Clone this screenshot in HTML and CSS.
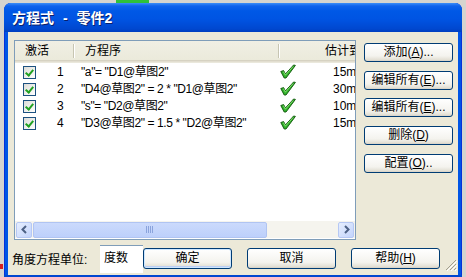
FILE: index.html
```html
<!DOCTYPE html>
<html lang="zh-CN">
<head>
    <meta charset="UTF-8">
    <title>方程式 - 零件2</title>
    <link rel="stylesheet" href="styles.css">
</head>
<body>
    <div class="desk-mark"></div>
    <div class="desk-x"></div>

    <div class="window">
        <div class="titlebar">方程式 - 零件2</div>

        <div class="client">
            <div class="upper">
                <div class="listview">
                    <div class="lv-head">
                        <div class="hcol h-act">激活</div>
                        <div class="hcol h-eq">方程序</div>
                        <div class="hcol h-val">估计到</div>
                    </div>

                    <div class="lv-body">
                        <div class="row">
                            <div class="cell c-act"><span class="chk"></span><span class="num">1</span></div>
                            <div class="cell c-eq">"a"= "D1@草图2"</div>
                            <div class="cell c-val"><span class="ok"></span><span class="val">15mm</span></div>
                        </div>
                        <div class="row">
                            <div class="cell c-act"><span class="chk"></span><span class="num">2</span></div>
                            <div class="cell c-eq">"D4@草图2" = 2 * "D1@草图2"</div>
                            <div class="cell c-val"><span class="ok"></span><span class="val">30mm</span></div>
                        </div>
                        <div class="row">
                            <div class="cell c-act"><span class="chk"></span><span class="num">3</span></div>
                            <div class="cell c-eq">"s"= "D2@草图2"</div>
                            <div class="cell c-val"><span class="ok"></span><span class="val">10mm</span></div>
                        </div>
                        <div class="row">
                            <div class="cell c-act"><span class="chk"></span><span class="num">4</span></div>
                            <div class="cell c-eq">"D3@草图2" = 1.5 * "D2@草图2"</div>
                            <div class="cell c-val"><span class="ok"></span><span class="val">15mm</span></div>
                        </div>
                    </div>

                    <div class="hscroll">
                        <span class="sb-btn">
                            <svg width="9" height="9" viewBox="0 0 9 9"><path d="M6 1 L2.5 4.5 L6 8" fill="none" stroke="#4D6185" stroke-width="2"/></svg>
                        </span>
                        <span class="sb-thumb">
                            <svg width="8" height="7" viewBox="0 0 8 7"><path d="M0.5 0v7M2.5 0v7M4.5 0v7M6.5 0v7" stroke="#8AA3DC" stroke-width="1"/></svg>
                        </span>
                        <span class="sb-track"></span>
                        <span class="sb-btn">
                            <svg width="9" height="9" viewBox="0 0 9 9"><path d="M3 1 L6.5 4.5 L3 8" fill="none" stroke="#4D6185" stroke-width="2"/></svg>
                        </span>
                    </div>
                </div>

                <div class="side">
                    <button class="btn">添加(<u>A</u>)...</button>
                    <button class="btn">编辑所有(<u>E</u>)...</button>
                    <button class="btn">编辑所有(<u>E</u>)...</button>
                    <button class="btn">删除(<u>D</u>)</button>
                    <button class="btn">配置(<u>O</u>)..</button>
                </div>
            </div>

            <div class="footer">
                <span class="unit-label">角度方程单位:</span>
                <div class="unit-box">度数</div>
                <button class="btn btn-default">确定</button>
                <button class="btn">取消</button>
                <button class="btn">帮助(<u>H</u>)</button>
                <span class="grip">
                    <svg width="12" height="12" viewBox="0 0 12 12">
                        <path d="M11 1L1 11M11 5L5 11M11 9L9 11" stroke="#A19E8F" stroke-width="1"/>
                        <path d="M12 2L2 12M12 6L6 12M12 10L10 12" stroke="#FFFFFF" stroke-width="1"/>
                    </svg>
                </span>
            </div>
        </div>
        <div class="frame-bottom"></div>
    </div>
</body>
</html>
```

FILE: styles.css
```css
html, body {
    margin: 0;
    height: 100%;
    overflow: hidden;
}

body {
    background-color: #d6d4cf;
    font-family: Tahoma, "Liberation Sans", "Noto Sans CJK SC", sans-serif;
    font-size: 12px;
    color: #000;
    position: relative;
}

/* bits of the desktop behind the dialog */
.desk-mark {
    position: absolute;
    left: 116px;
    top: 0;
    width: 33px;
    height: 3px;
    background-color: #2fc23a;
}

.desk-x {
    position: absolute;
    left: 0;
    top: 264px;
    width: 3px;
    height: 5px;
    background-color: #d42020;
}

.window {
    margin: 3px 0 0 4px;
    width: 458px;
    border-radius: 7px 7px 0 0;
    background-color: #0055e5;
    box-shadow: inset 1px 0 0 #0831d9, inset -1px 0 0 #0831d9;
    overflow: hidden;
}

.titlebar {
    height: 29px;
    line-height: 31px;
    padding-left: 8px;
    color: #fff;
    font-family: "Liberation Sans", "Noto Sans CJK SC", sans-serif;
    font-size: 14px;
    font-weight: bold;
    word-spacing: 5px;
    text-shadow: 1px 1px 0 #0a1f6b;
    background: linear-gradient(#3d8ef8 0, #0f62ec 3px, #0058e6 8px, #0054e3 55%, #0048d0 88%, #003fc0 100%);
}

.client {
    margin: 0 4px;
    height: 243px;
    background-color: #ece9d8;
    display: flex;
    flex-direction: column;
}

.frame-bottom {
    height: 4px;
    background-color: #0046d0;
}

.upper {
    display: flex;
    padding: 8px 5px 0 6px;
    gap: 8px;
}

/* list view */
.listview {
    width: 340px;
    height: 198px;
    border: 1px solid #7f9db9;
    background-color: #fff;
    display: flex;
    flex-direction: column;
    overflow: hidden;
}

.lv-head,
.row {
    display: grid;
    grid-template-columns: 59px 205px 120px;
}

.lv-head {
    height: 19px;
    line-height: 21px;
    background: linear-gradient(#f0efe4, #ebeadb);
    border-bottom: 1px solid #d6d2c2;
    box-shadow: 0 1px 0 #e2ded0, 0 2px 0 #eae8dc;
}

.hcol {
    position: relative;
    white-space: nowrap;
}

.h-act { padding-left: 10px; }
.h-eq { padding-left: 11px; }
.h-val { padding-left: 46px; }

.h-eq::before,
.h-val::before {
    content: "";
    position: absolute;
    left: -1px;
    top: 3px;
    height: 14px;
    width: 1px;
    background-color: #c7c5b2;
    box-shadow: 1px 0 0 #fff;
}

.lv-body {
    flex: 1;
    padding-top: 3px;
}

.row {
    height: 17px;
    line-height: 17px;
    white-space: nowrap;
}

.cell {
    display: flex;
    align-items: center;
}

.c-act { padding-left: 8px; }
.c-eq { padding-left: 7px; letter-spacing: -0.4px; }
.c-val { padding-left: 1px; }

.chk {
    width: 11px;
    height: 11px;
    border: 1px solid #1c5180;
    background: linear-gradient(135deg, #dcdcd7, #fff);
    position: relative;
}

.chk::after {
    content: "";
    position: absolute;
    left: 3px;
    top: 1px;
    width: 3px;
    height: 6px;
    border: solid #21a121;
    border-width: 0 2px 2px 0;
    transform: rotate(40deg);
}

.num {
    margin-left: 21px;
}

.ok {
    width: 16px;
    height: 15px;
    margin-top: -3px;
    background: no-repeat center / 16px 15px url("data:image/svg+xml;utf8,<svg xmlns='http://www.w3.org/2000/svg' width='16' height='15' viewBox='0 0 16 15'><path d='M0.8 7.5 L3.6 6.6 L5.4 10 L13.6 1 L15.4 1.4 L6 14 L4.2 14 Z' fill='%2330b32a' stroke='%23195e14' stroke-width='1' stroke-linejoin='round'/><path d='M3.4 7.6 L5.4 11.2 L13 2.6' fill='none' stroke='%238fe07a' stroke-width='0.9'/></svg>");
}

.val {
    margin-left: 37px;
}

/* horizontal scroll bar */
.hscroll {
    height: 17px;
    display: flex;
    align-items: center;
    gap: 1px;
    padding: 0 1px;
    background-color: #f5f4ee;
    margin-bottom: 1px;
}

.sb-btn {
    box-sizing: border-box;
    width: 16px;
    height: 16px;
    border: 1px solid #b6c8f4;
    border-radius: 2px;
    background: linear-gradient(135deg, #e6eefe, #c3d4fc);
    display: flex;
    align-items: center;
    justify-content: center;
}

.sb-thumb {
    width: 234px;
    height: 16px;
    box-sizing: border-box;
    border: 1px solid #b0c4f2;
    border-radius: 2px;
    background: linear-gradient(#cbdafc, #bdd0fb);
    display: flex;
    align-items: center;
    justify-content: center;
}

.sb-track {
    flex: 1;
}

/* buttons */
.side {
    display: flex;
    flex-direction: column;
    gap: 9px;
    padding-top: 3px;
}

.btn {
    width: 89px;
    height: 19px;
    padding: 0;
    border: 1px solid #003c74;
    border-radius: 3px;
    background: linear-gradient(#ffffff, #f4f3ee 70%, #e3e0d5 92%, #d6d0c5);
    font-family: Tahoma, "Liberation Sans", "Noto Sans CJK SC", sans-serif;
    font-size: 12px;
    line-height: 17px;
    color: #000;
}

.side .btn:nth-child(3) {
    margin-top: -1px;
}

.footer {
    display: flex;
    align-items: center;
    margin-top: 3px;
    padding-left: 4px;
    height: 30px;
}

.unit-label {
    width: 88px;
}

.unit-box {
    width: 39px;
    height: 27px;
    line-height: 24px;
    padding-left: 4px;
    background-color: #fff;
    border-top: 1px solid #7f9db9;
    margin-top: 2px;
}

.footer .btn {
    height: 21px;
    margin-right: 15px;
}

.footer .btn-default {
    box-shadow: inset 0 0 0 1px #cee7ff, inset 0 -1px 0 1px #bccef4;
}

.grip {
    margin: 14px 0 0 -10px;
    display: flex;
}
```
